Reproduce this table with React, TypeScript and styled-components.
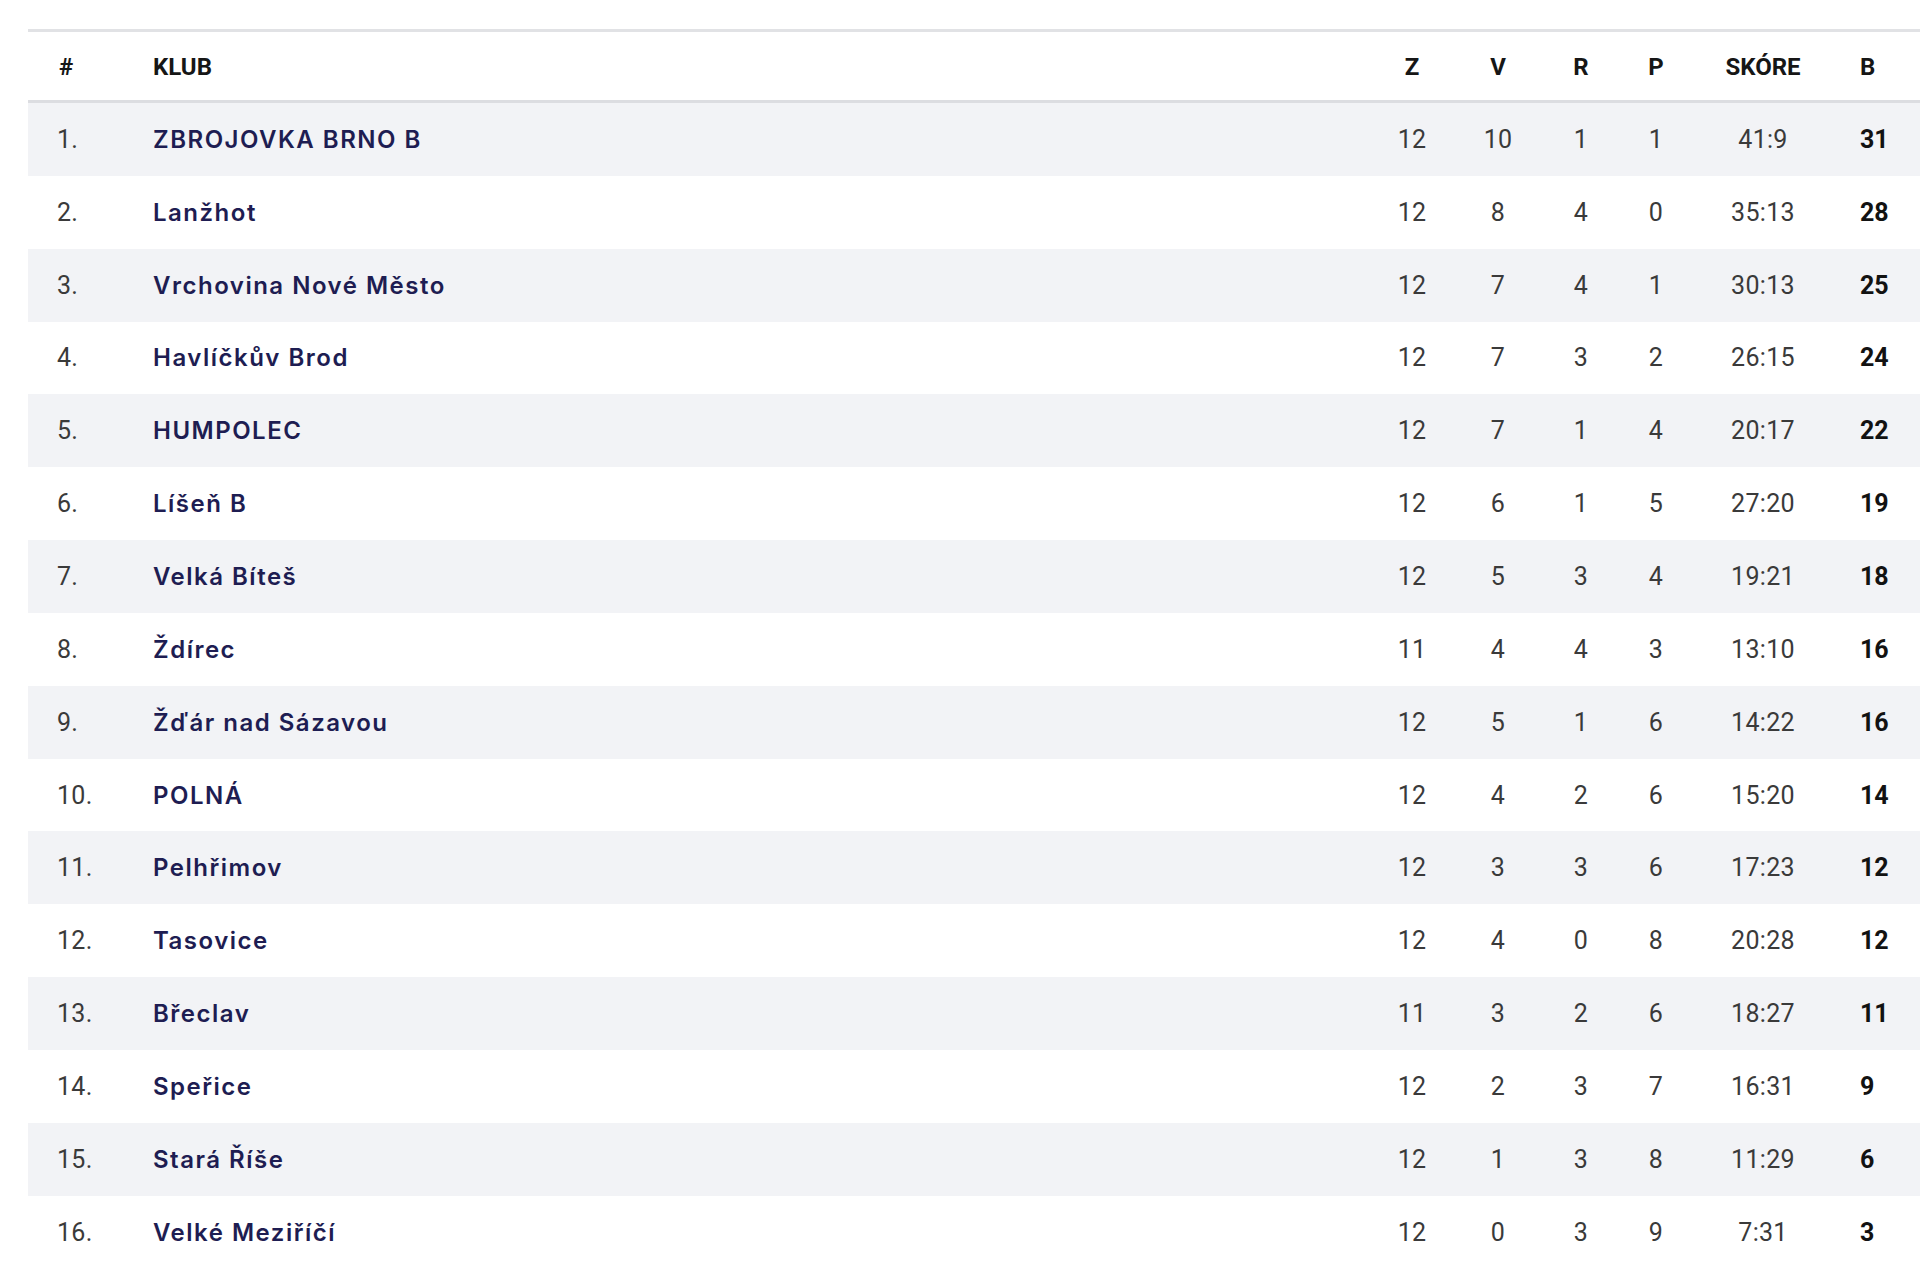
import React from "react";
import styled, { createGlobalStyle } from "styled-components";

const GlobalStyle = createGlobalStyle`
  html, body {
    margin: 0;
    padding: 0;
    background: #ffffff;
    overflow: hidden;
  }
  body {
    font-family: Roboto, "Liberation Sans", sans-serif;
  }
`;

type Team = {
  rank: number;
  name: string;
  z: number;
  v: number;
  r: number;
  p: number;
  score: string;
  b: number;
};

const teams: Team[] = [
  { rank: 1, name: "ZBROJOVKA BRNO B", z: 12, v: 10, r: 1, p: 1, score: "41:9", b: 31 },
  { rank: 2, name: "Lanžhot", z: 12, v: 8, r: 4, p: 0, score: "35:13", b: 28 },
  { rank: 3, name: "Vrchovina Nové Město", z: 12, v: 7, r: 4, p: 1, score: "30:13", b: 25 },
  { rank: 4, name: "Havlíčkův Brod", z: 12, v: 7, r: 3, p: 2, score: "26:15", b: 24 },
  { rank: 5, name: "HUMPOLEC", z: 12, v: 7, r: 1, p: 4, score: "20:17", b: 22 },
  { rank: 6, name: "Líšeň B", z: 12, v: 6, r: 1, p: 5, score: "27:20", b: 19 },
  { rank: 7, name: "Velká Bíteš", z: 12, v: 5, r: 3, p: 4, score: "19:21", b: 18 },
  { rank: 8, name: "Ždírec", z: 11, v: 4, r: 4, p: 3, score: "13:10", b: 16 },
  { rank: 9, name: "Žďár nad Sázavou", z: 12, v: 5, r: 1, p: 6, score: "14:22", b: 16 },
  { rank: 10, name: "POLNÁ", z: 12, v: 4, r: 2, p: 6, score: "15:20", b: 14 },
  { rank: 11, name: "Pelhřimov", z: 12, v: 3, r: 3, p: 6, score: "17:23", b: 12 },
  { rank: 12, name: "Tasovice", z: 12, v: 4, r: 0, p: 8, score: "20:28", b: 12 },
  { rank: 13, name: "Břeclav", z: 11, v: 3, r: 2, p: 6, score: "18:27", b: 11 },
  { rank: 14, name: "Speřice", z: 12, v: 2, r: 3, p: 7, score: "16:31", b: 9 },
  { rank: 15, name: "Stará Říše", z: 12, v: 1, r: 3, p: 8, score: "11:29", b: 6 },
  { rank: 16, name: "Velké Meziříčí", z: 12, v: 0, r: 3, p: 9, score: "7:31", b: 3 },
];

const Page = styled.div`
  padding: 29px 0 0 28px;
`;

const Table = styled.div`
  width: 1892px;
  display: flex;
  flex-direction: column;
`;

const columns = "123px 1fr 84px 88px 78px 72px 142px 86px";

const HeaderRow = styled.div`
  display: grid;
  grid-template-columns: ${columns};
  align-items: center;
  height: 68px;
  border-top: 3px solid #e1e2e5;
  border-bottom: 3px solid #dcdde1;
`;

const BodyRow = styled.div<{ $striped: boolean }>`
  display: grid;
  grid-template-columns: ${columns};
  align-items: center;
  height: 72.85px;
  background: ${(p) => (p.$striped ? "#f2f3f6" : "#ffffff")};
`;

type Align = "left" | "center";

const HeadCell = styled.div<{ $align?: Align; $pad?: number }>`
  font-family: Roboto, "Liberation Sans", sans-serif;
  font-weight: 700;
  font-size: 24px;
  color: #161616;
  text-align: ${(p) => p.$align ?? "center"};
  padding-left: ${(p) => p.$pad ?? 0}px;
  padding-top: 2px;
`;

const NumCell = styled.div<{ $align?: Align; $pad?: number; $bold?: boolean }>`
  font-family: Roboto, "Liberation Sans", sans-serif;
  font-weight: ${(p) => (p.$bold ? 700 : 400)};
  font-size: 25px;
  letter-spacing: ${(p) => (p.$bold ? 0 : 0.3)}px;
  color: ${(p) => (p.$bold ? "#121212" : "#3a3a3a")};
  text-align: ${(p) => p.$align ?? "center"};
  padding-left: ${(p) => p.$pad ?? 0}px;
`;

const ClubName = styled.div`
  font-family: Inter, "Noto Sans", sans-serif;
  font-weight: 600;
  font-size: 24px;
  letter-spacing: 1.5px;
  color: #1e1d52;
  white-space: nowrap;
  padding-left: 2px;
`;

export default function App() {
  return (
    <>
      <GlobalStyle />
      <Page>
        <Table>
          <HeaderRow>
            <HeadCell $align="left" $pad={31}>#</HeadCell>
            <HeadCell $align="left" $pad={2}>KLUB</HeadCell>
            <HeadCell>Z</HeadCell>
            <HeadCell>V</HeadCell>
            <HeadCell>R</HeadCell>
            <HeadCell>P</HeadCell>
            <HeadCell>SKÓRE</HeadCell>
            <HeadCell $align="left" $pad={26}>B</HeadCell>
          </HeaderRow>
          {teams.map((t) => (
            <BodyRow key={t.rank} $striped={t.rank % 2 === 1}>
              <NumCell $align="left" $pad={29}>{t.rank}.</NumCell>
              <ClubName>{t.name}</ClubName>
              <NumCell>{t.z}</NumCell>
              <NumCell>{t.v}</NumCell>
              <NumCell>{t.r}</NumCell>
              <NumCell>{t.p}</NumCell>
              <NumCell>{t.score}</NumCell>
              <NumCell $align="left" $pad={26} $bold>{t.b}</NumCell>
            </BodyRow>
          ))}
        </Table>
      </Page>
    </>
  );
}
